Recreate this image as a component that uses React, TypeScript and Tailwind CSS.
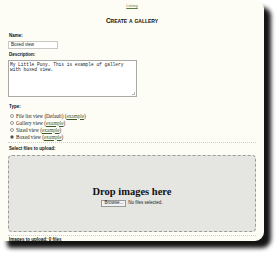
import type React from "react";

const types = [
  { label: "File list view (Default)", checked: false },
  { label: "Gallery view", checked: false },
  { label: "Sized view", checked: false },
  { label: "Boxed view", checked: true },
];

function Label({ children }: { children: React.ReactNode }) {
  return (
    <div className="text-[4.5px] leading-[6px] font-bold text-[#111] font-['Liberation_Sans',sans-serif]">
      {children}
    </div>
  );
}

export default function App() {
  return (
    <div className="w-[280px] h-[256px] bg-white overflow-hidden">
      <div className="w-[264px] h-[241px] bg-[#fdfdf6] rounded-r-[9px] rounded-bl-[4px] shadow-[7px_7px_4px_rgba(0,0,0,0.92)] overflow-hidden px-[8px] pt-[3px] font-['Liberation_Sans',sans-serif]">
        <div className="text-center text-[4px] leading-[5px] text-[#5f7a45] underline">Listing</div>

        <h1 className="mt-[9px] text-center text-[6.5px] leading-[7px] font-bold [font-variant:small-caps] text-[#111]">
          Create a gallery
        </h1>

        {/* Form */}
        <div className="mt-[9px] ml-[1px]">
          <Label>Name:</Label>
        </div>
        <div className="mt-[2px] w-[50px] h-[8px] bg-white border border-[#c8c8c4] flex items-center px-[2px] text-[4.5px] text-[#222]">
          Boxed view
        </div>

        <div className="mt-[3px] ml-[1px]">
          <Label>Description:</Label>
        </div>
        <div className="mt-[2px] w-[129px] h-[37px] bg-white border border-[#a8a8a4] px-[1px] pt-[1px] text-[4.5px] leading-[5px] text-[#222] font-['Liberation_Mono',monospace] whitespace-pre relative">
          {"My Little Pony. This is example of gallery\nwith boxed view."}
          <div className="absolute right-[1px] bottom-[1px] w-[3px] h-[3px] border-r border-b border-[#bbb]" />
        </div>

        <div className="mt-[7px] ml-[1px]">
          <Label>Type:</Label>
        </div>
        <div className="mt-[2px] flex flex-col ml-[2px]">
          {types.map((t) => (
            <div key={t.label} className="flex items-center gap-[2px] h-[7px]">
              <span className="w-[4px] h-[4px] rounded-full border-[0.5px] border-[#999] bg-white flex items-center justify-center">
                {t.checked && <span className="w-[2px] h-[2px] rounded-full bg-[#222]" />}
              </span>
              <span className="text-[5.2px] leading-[6px] text-[#222] font-['Liberation_Serif',serif]">
                {t.label} (<span className="underline text-[#3d5a25]">example</span>)
              </span>
            </div>
          ))}
        </div>

        <div className="mt-[2px] border-t border-dotted border-[#cfcfc8]" />

        <div className="mt-[3px] ml-[1px]">
          <Label>Select files to upload:</Label>
        </div>
        <div className="mt-[3px] h-[77px] rounded-[4px] border-[1.5px] border-dashed border-[#9c9c98] bg-[#e5e5e1] flex flex-col items-center justify-center">
          <div className="mt-[6px] text-[10.5px] leading-[11px] font-bold text-[#111] font-['Liberation_Serif',serif]">
            Drop images here
          </div>
          <div className="mt-[3px] flex items-center gap-[2px] text-[4.5px] text-[#222]">
            <span className="w-[25px] h-[7px] border border-[#999] bg-[#f2f2f0] flex items-center justify-center">Browse...</span>
            <span>No files selected.</span>
          </div>
        </div>

        <div className="mt-[3px] border-t border-dotted border-[#cfcfc8]" />
        <div className="mt-[1px] ml-[1px]">
          <Label>Images to upload: 0 files</Label>
        </div>
      </div>
    </div>
  );
}
